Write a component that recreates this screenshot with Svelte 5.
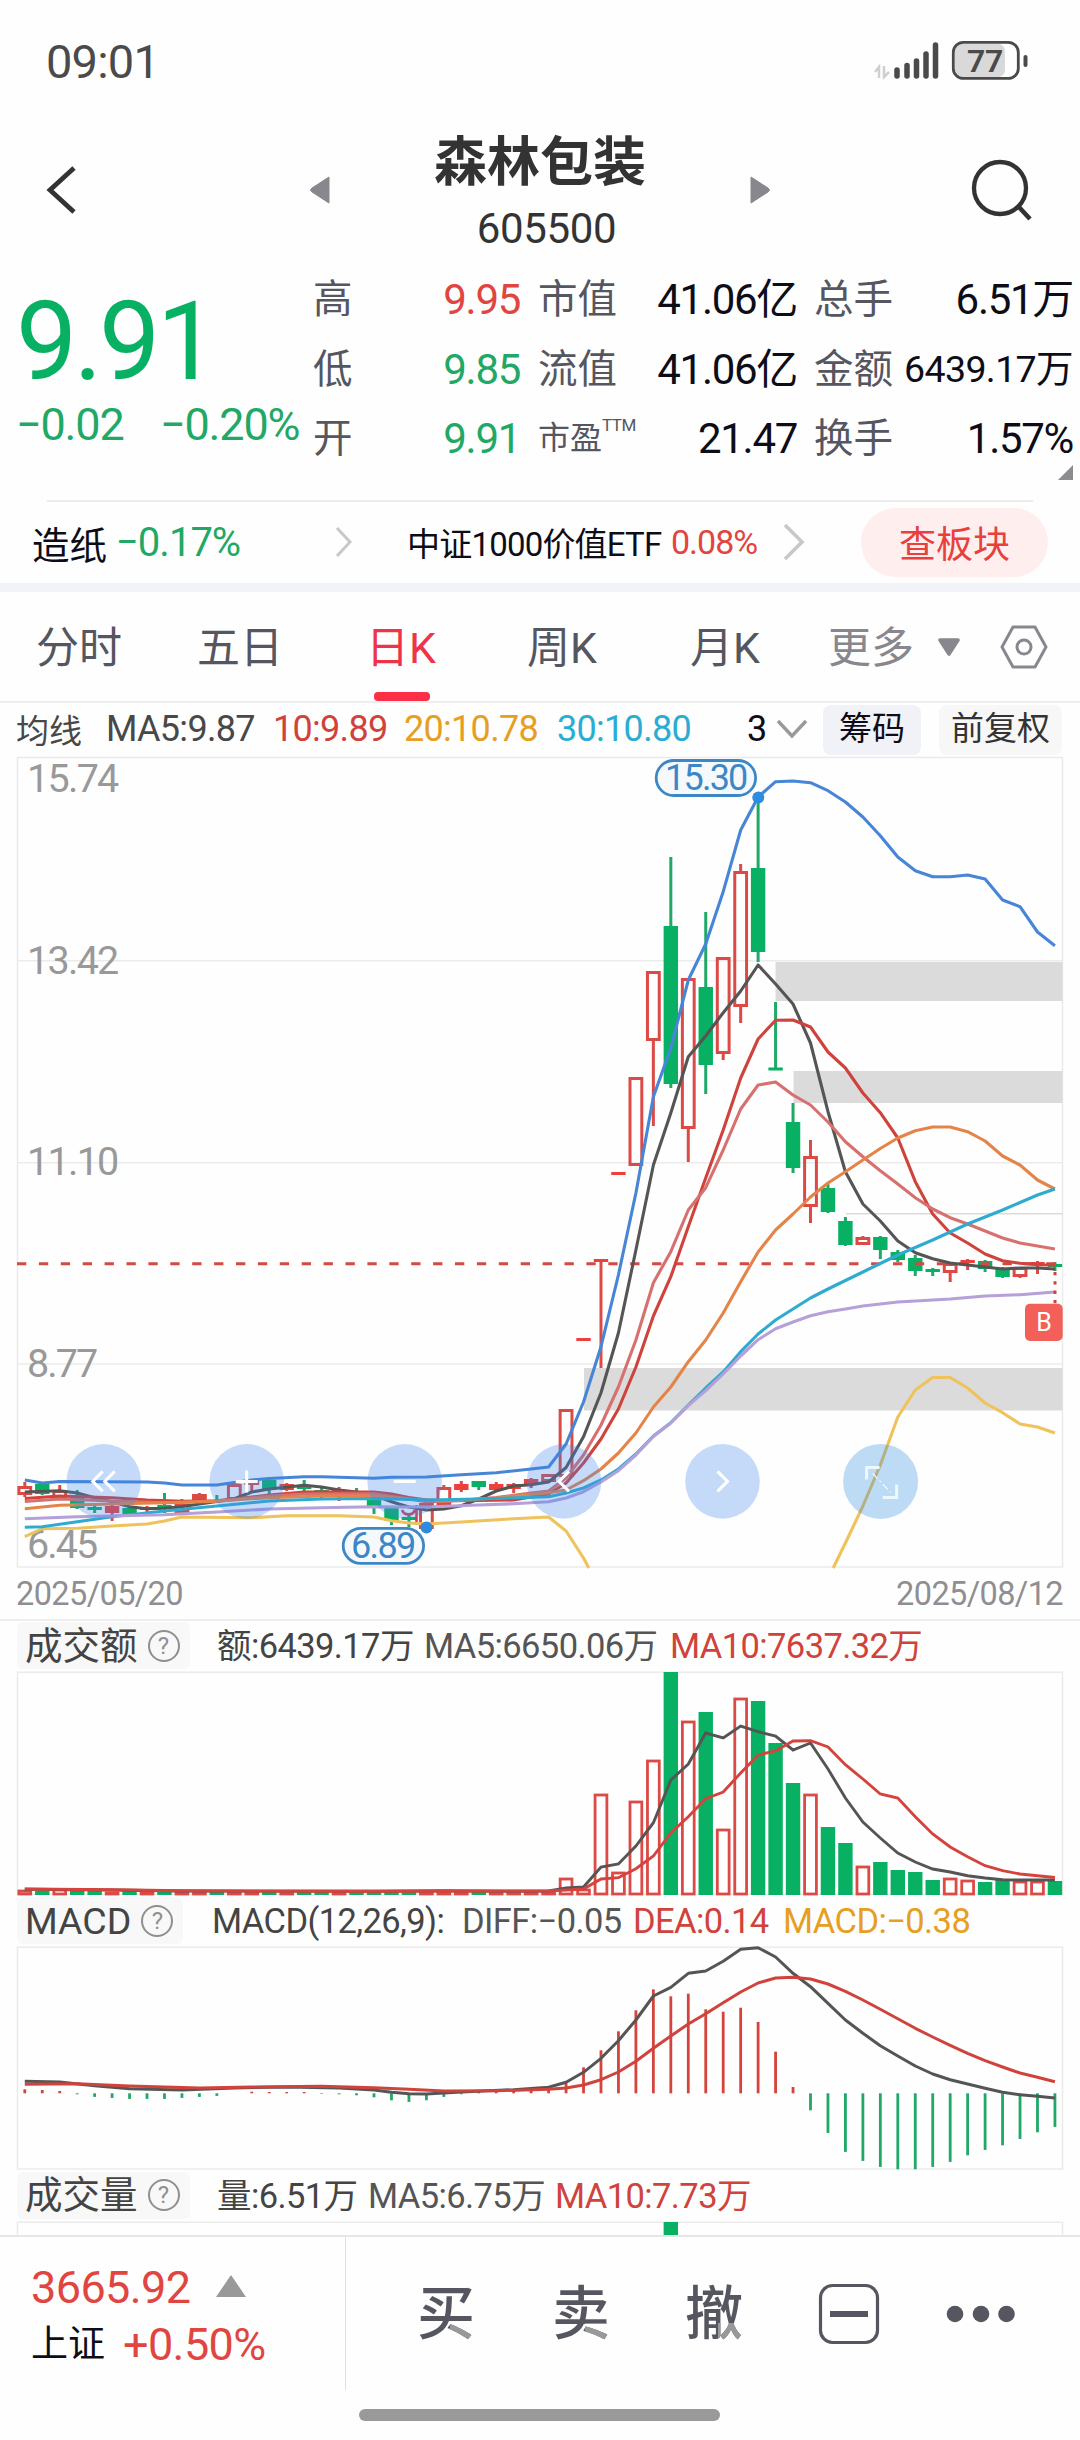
<script>
  const step = 17.46;

  /** @param {number} i bar number, 0 is the oldest day */
  const x = (i) => 24.8 + step * i;

  // "bar,y bar,y ..." -> svg points
  function line(text) {
    return text
      .trim()
      .split(/\s+/)
      .map((p) => {
        const [i, y] = p.split(',').map(Number);
        return `${x(i).toFixed(1)},${y}`;
      })
      .join(' ');
  }

  const quote = [
    ['高', '9.95', 'up', '市值', '41.06亿', '总手', '6.51万'],
    ['低', '9.85', 'down', '流值', '41.06亿', '金额', '6439.17万'],
    ['开', '9.91', 'down', '市盈', '21.47', '换手', '1.57%']
  ];

  const tabs = ['分时', '五日', '日K', '周K', '月K'];
  let active = '日K';

  // kind (r = hollow, f = filled red, g = green), high, body top, body bottom, low
  const candles = [
    ['r', 1482, 1487, 1494, 1497], ['g', 1484, 1484, 1494, 1495], ['r', 1485, 1491, 1498, 1498],
    ['g', 1490, 1497, 1508, 1509], ['g', 1505, 1507, 1510, 1513], ['f', 1505, 1506, 1513, 1521],
    ['g', 1507, 1508, 1514, 1515], ['f', 1506, 1507, 1510, 1513], ['g', 1493, 1505, 1507, 1513],
    ['r', 1499, 1505, 1512, 1513], ['r', 1493, 1495, 1499, 1500], ['g', 1495, 1500, 1502, 1503],
    ['r', 1484, 1485, 1499, 1500], ['r', 1480, 1481, 1484, 1491], ['g', 1480, 1480, 1490, 1494],
    ['f', 1483, 1484, 1490, 1491], ['g', 1480, 1485, 1489, 1492], ['g', 1488, 1490, 1497, 1499],
    ['f', 1487, 1490, 1494, 1501], ['g', 1488, 1491, 1493, 1495], ['g', 1492, 1498, 1506, 1514],
    ['g', 1507, 1508, 1521, 1525], ['g', 1514, 1517, 1520, 1527], ['r', 1503, 1504, 1528, 1529],
    ['r', 1485, 1488, 1504, 1506], ['f', 1481, 1484, 1490, 1492], ['g', 1481, 1481, 1487, 1490],
    ['f', 1482, 1484, 1490, 1491], ['f', 1483, 1484, 1489, 1493], ['f', 1478, 1479, 1485, 1488],
    ['r', 1474, 1475, 1481, 1482], ['r', 1409, 1410, 1476, 1477], ['f', 1339, 1338, 1341, 1340],
    ['f', 1260, 1259, 1262, 1368], ['f', 1173, 1172, 1175, 1174], ['r', 1077, 1078, 1165, 1166],
    ['r', 971, 972, 1040, 1126], ['g', 857, 926, 1084, 1088], ['r', 978, 979, 1128, 1162],
    ['g', 912, 987, 1065, 1094], ['r', 957, 958, 1053, 1060], ['r', 864, 872, 1006, 1023],
    ['g', 797, 868, 952, 962], ['g', 1002, 1067.5, 1070.5, 1070], ['g', 1103, 1122, 1168, 1173],
    ['r', 1140, 1157, 1206, 1223], ['g', 1184, 1188, 1212, 1213], ['g', 1217, 1221, 1245, 1246],
    ['r', 1236, 1238, 1244, 1245], ['g', 1236, 1237, 1250, 1259], ['g', 1250, 1252, 1260, 1262],
    ['g', 1255, 1258, 1271, 1276], ['g', 1268, 1269, 1272, 1276], ['r', 1263, 1264, 1272, 1282],
    ['f', 1259, 1260, 1263, 1270], ['g', 1260, 1261, 1269, 1272], ['g', 1267, 1268, 1277, 1278],
    ['r', 1267, 1268, 1276, 1278], ['f', 1261, 1262, 1265, 1274], ['g', 1262, 1264, 1267, 1271]
  ];

  const gaps = [
    { x: 775.5, y: 962, h: 39 },
    { x: 793.5, y: 1071, h: 32 },
    { x: 584, y: 1368, h: 42.5 },
    { x: 846, y: 1213, h: 1.5 }
  ];

  const priceLines = [
    { color: '#efc25c', points: '0,1536.7 1,1528.7 3,1528.3 5,1526 7,1524 8,1521 9,1517 13,1517.7 15,1515.7 18,1515.7 20,1517 21,1520.7 22,1523 23,1524 25,1522 28,1518.7 30,1517 31,1531 32,1558 32.3,1568' },
    { color: '#efc25c', points: '46.3,1568 47,1543 48,1506 49,1465 50,1417 51,1390 52,1377.5 53,1377.5 54,1388 55,1403 56,1412.7 57,1424 58,1427 59,1433' },
    { color: '#4785d6', points: '0,1480 1,1483 2,1481.5 7,1482 8,1483 9,1485 11,1485 12,1482.5 13,1480 14,1478.5 16,1476.7 17,1476.7 20,1478.3 21,1477.3 23,1477 25,1474.7 27,1472.7 29,1469 30,1467 31,1444 32,1402 33,1346.7 34,1275 35,1193 36,1096.7 37,1048 38,980 39,944 40,891.7 41,830 42,797 43,781.7 44,781 45,782.7 46,790.7 47,802 48,817 49,835.7 50,857 51,870.7 52,876.7 53,876.7 54,875 55,879 56,900 57,906.7 58,932 59,945.7' },
    { color: '#555555', points: '0,1492 2,1490.7 3,1493 4,1497.7 5,1501.7 6,1506.7 7,1508.7 8,1508.3 9,1506.7 10,1504 11,1501.5 12,1498.7 13,1492 14,1489 16,1485.3 17,1487 18,1490 19,1492 20,1495 21,1501.7 22,1507 23,1510 24,1509 25,1505.7 26,1499 27,1491 28,1486 29,1484.7 30,1482 31,1467.5 32,1436.7 33,1392.7 34,1333 35,1250 36,1165 37,1113 38,1056.7 39,1036 40,1012.7 41,991 42,965 43,984 44,1004 45,1043 46,1111.7 47,1171.7 48,1204 49,1221 50,1241 51,1252.7 52,1258.7 53,1263 54,1265 55,1267 56,1269 57,1268 58,1268 59,1269' },
    { color: '#cf433c', points: '0,1498.5 2,1496 5,1497.7 7,1500 9,1501.3 11,1500.7 13,1497 14,1495 16,1492 20,1492 21,1494 22,1497.5 23,1500 24,1500.7 26,1500.5 28,1500 30,1494 31,1483 32,1463 33,1439 34,1409 35,1367 36,1316 37,1276.7 38,1226.7 39,1178 40,1130 41,1078 42,1039 43,1020.3 44,1020 45,1027 46,1052 47,1068 48,1093 49,1112.7 50,1138 51,1181.7 52,1214 53,1233 54,1243 55,1254 56,1260.7 57,1263.3 58,1264.7 59,1265' },
    { color: '#d87070', points: '0,1501.5 2,1499 5,1501 8,1502.7 11,1501.5 14,1496 16,1494 20,1493.7 22,1499 23,1501.7 25,1500.5 27,1497.5 29,1493 30,1491 31,1478 32,1455 33,1425 34,1387 35,1340 36,1282.7 37,1251.7 38,1210 39,1187.7 40,1150 41,1109 42,1085 43,1082 44,1095 45,1105 46,1122 47,1141.7 48,1156.7 49,1170.7 50,1184 51,1197.7 52,1209 53,1217.7 54,1224 55,1231 56,1238 57,1243 58,1246 59,1249' },
    { color: '#e58448', points: '0,1508.7 2,1505.3 5,1504 8,1502.7 11,1501 14,1497.7 17,1496 20,1496 22,1499 24,1501 27,1498 30,1492.7 31,1490 32,1480.7 33,1469 34,1453 35,1433 36,1407 37,1387 38,1361.7 39,1340 40,1313 41,1281.7 42,1252 43,1230 44,1214 45,1197 46,1183 47,1171.7 48,1160 49,1148.5 50,1138 51,1130.7 52,1127 53,1127 54,1131.7 55,1141 56,1156 57,1165 58,1180 59,1189' },
    { color: '#30abd0', points: '0,1527.3 1,1526.7 3,1521.7 5,1516.7 8,1511 11,1506 14,1501 17,1499 20,1498.5 23,1500 26,1499 30,1496.7 31,1493 32,1488 33,1480 34,1469 35,1454 36,1436 37,1422.7 38,1405 39,1388 40,1372 41,1351.7 42,1334 43,1320 44,1309 45,1298 46,1289 48,1272 50,1255 52,1240 54,1224 56,1210 58,1195 59,1189' },
    { color: '#b5a0da', points: '0,1518.7 3,1516.7 8,1514.7 11,1512 14,1509 17,1507.7 20,1506.7 23,1507 26,1505 28,1503.7 30,1501.7 31,1498 32,1491.7 33,1482 34,1470.7 35,1455 36,1436.5 37,1423 38,1405.7 39,1390.7 40,1374 41,1356 42,1339.7 43,1328.7 44,1322 45,1315.7 46,1311.7 47,1309 48,1306 50,1302 53,1299 55,1296 57,1294.7 59,1292' }
  ];

  const priceLabels = [
    ['15.74', 792, 92], ['13.42', 974, 92], ['11.10', 1175, 92], ['8.77', 1377, 71], ['6.45', 1558, 71]
  ];

  const turnoverTop = [
    1890, 1891, 1889, 1891, 1891, 1892, 1891, 1891, 1892, 1892, 1892, 1892, 1892, 1892, 1892, 1892, 1892, 1892, 1892, 1892,
    1892, 1892, 1892, 1892, 1892, 1892, 1892, 1892, 1892, 1892, 1891, 1878, 1889, 1794, 1872, 1801, 1760, 1672, 1721, 1712,
    1829, 1698, 1701, 1743, 1783, 1794, 1827, 1843, 1866, 1862, 1870, 1872, 1880, 1878, 1880, 1882, 1880, 1881, 1881, 1881
  ];
  const turnoverMa5 = '0,1889.3 5,1890 9,1891 20,1891.3 24,1890.7 28,1891.3 30,1891 31,1888 32,1887 33,1867 34,1864 35,1846 36,1822.7 37,1780 38,1764 39,1733 40,1738 41,1726 42,1731.7 43,1736 44,1750 45,1743 46,1769 47,1798 48,1822 49,1838 50,1853 51,1862 52,1869 53,1872 54,1875.7 55,1878 56,1879.7 57,1880 59,1880';
  const turnoverMa10 = '0,1889 5,1889.7 9,1890.7 20,1891.3 30,1891 32,1889 33,1879 34,1877.7 35,1868.7 36,1856 37,1833 38,1816.7 39,1798.7 40,1792 41,1773 42,1755 43,1751 44,1741 45,1740.7 46,1747 47,1764.7 48,1779 49,1794 50,1798 51,1816.7 52,1834 53,1847 54,1856.7 55,1865.7 56,1870.7 57,1874 58,1875.7 59,1877.5';

  // bar length above (+) or below (-) the zero line
  const macd = [
    4, 3.3, 2.3, -1, -3.6, -4.6, -5.6, -5.6, -5.6, -4.6, -3.6, -2.6, 0, 1.6, 1.3, 1.3, 1.3, -0.6, -1, -2,
    -4, -7, -8.6, -7, -3.6, -1, 1.3, 2.3, 2.3, 3, 4, 10, 26, 43, 62, 83, 104, 97, 99.6, 84,
    81.6, 85.6, 71.3, 41.6, 6.3, -17, -39.6, -58.6, -67.6, -73.6, -76, -76, -73.6, -68.6, -62, -56.6, -52, -45.6, -39, -33.6
  ];
  const diff = '0,2081.3 2,2082 4,2085.7 6,2088.7 9,2090 12,2088 15,2087 18,2088 20,2090 21,2092.3 22,2093.7 23,2094 25,2092 28,2089.7 30,2087.3 31,2082.3 32,2072.3 33,2058.3 34,2040.7 35,2020 36,1996 37,1987.3 38,1973.3 39,1971 40,1961.3 41,1949.3 42,1947.7 43,1957 44,1973.3 45,1986.7 46,2003.3 47,2020 48,2033.3 49,2045.7 50,2056 51,2066 52,2074 53,2079.7 54,2084 55,2088.3 56,2092.3 57,2094.7 58,2096.3 59,2098';
  const dea = '0,2084.3 3,2083.7 6,2086 10,2088 13,2087 17,2086.3 20,2087.7 22,2089.3 24,2091 27,2090.7 30,2089.3 31,2088 32,2085 33,2079.7 34,2072 35,2061.3 36,2048.3 37,2036 38,2024 39,2013.7 40,2002.7 41,1992 42,1983 43,1978 44,1977.3 45,1979 46,1984 47,1991.3 48,2000 49,2009.3 50,2018.7 51,2028.3 52,2037 53,2045.3 54,2053.3 55,2060.7 56,2067 57,2073 58,2077.3 59,2081.7';

  const buttons = [
    { x: 103.7, d: 'M-1 -10 l-10 10 l10 10 M11 -10 l-10 10 l10 10' },
    { x: 246.7, d: 'M0 -11 v22 M-11 0 h22' },
    { x: 404.7, d: 'M-11 0 h22' },
    { x: 564, d: 'M5 -10 l-10 10 l10 10' },
    { x: 722.5, d: 'M-5 -10 l10 10 l-10 10' }
  ];
</script>

<div class="page">
  <div class="status">
    <span class="time">09:01</span>
    <svg width="160" height="46" viewBox="870 38 160 46">
      <path d="M875 72 l4 -5 v11 M884 66 v11 l5 -5" fill="none" stroke="#cfcfcf" stroke-width="2.5" />
      {#each [[897, 70], [907, 65.5], [916.5, 61], [926, 54], [935.5, 45]] as [cx, top]}
        <line x1={cx} x2={cx} y1={top} y2="76" stroke="#4a4a4a" stroke-width="5.5" stroke-linecap="round" />
      {/each}
      <rect x="955" y="44" width="50" height="33" rx="7" fill="#d9d9d9" />
      <rect x="953.3" y="42.4" width="65" height="36" rx="10" fill="none" stroke="#4a4a4a" stroke-width="2.8" />
      <path d="M1025.5 57 v8" stroke="#4a4a4a" stroke-width="4" stroke-linecap="round" />
      <text x="985" y="72.3" text-anchor="middle" font-size="32" font-weight="600" fill="#4a4a4a" textLength="36">77</text>
    </svg>
  </div>

  <header class="title">
    <svg width="34" height="52" viewBox="0 0 34 52"><path d="M28 4 L4 26 L28 48" fill="none" stroke="#333" stroke-width="4.8" /></svg>
    <svg width="22" height="30" viewBox="0 0 22 30"><path d="M20 2 v26 L3 17 q-3 -2 0 -4 Z" fill="#88878d" stroke="#88878d" stroke-linejoin="round" /></svg>
    <div class="stock">
      <h1>森林包装</h1>
      <span>605500</span>
    </div>
    <svg class="next" width="22" height="30" viewBox="0 0 22 30"><path d="M2 2 v26 L19 17 q3 -2 0 -4 Z" fill="#88878d" stroke="#88878d" stroke-linejoin="round" /></svg>
    <svg class="search" width="64" height="64" viewBox="0 0 64 64">
      <circle cx="30" cy="30" r="26" fill="none" stroke="#333" stroke-width="4.3" />
      <path d="M48 48 L60 61" stroke="#333" stroke-width="4.6" />
    </svg>
  </header>

  <section class="quote">
    <div class="now down">
      <strong>9.91</strong>
      <div class="change"><span>−0.02</span><span>−0.20%</span></div>
    </div>
    <div class="facts">
      {#each quote as [a, av, tone, b, bv, c, cv]}
        <div class="fact">
          <span class="label">{a}</span>
          <span class="value {tone}">{av}</span>
          {#if b === '市盈'}
            <span class="label small">{b}<sup>TTM</sup></span>
          {:else}
            <span class="label">{b}</span>
          {/if}
          <span class="value">{bv}</span>
          <span class="label">{c}</span>
          <span class="value" class:long={cv.length > 7}>{cv}</span>
        </div>
      {/each}
      <i class="corner"></i>
    </div>
  </section>

  <section class="sector">
    <span class="board">造纸</span>
    <span class="board-change down">−0.17%</span>
    <svg width="20" height="32" viewBox="0 0 20 32"><path d="M3 2 L16 16 L3 30" fill="none" stroke="#c8c8c8" stroke-width="3" /></svg>
    <span class="etf">中证1000价值ETF</span>
    <span class="etf-change up">0.08%</span>
    <svg width="26" height="38" viewBox="0 0 26 38"><path d="M3 2 L20 19 L3 36" fill="none" stroke="#c8c8c8" stroke-width="3.6" /></svg>
    <button>查板块</button>
  </section>

  <nav class="tabs">
    {#each tabs as tab}
      <span class:active={tab === active}>{tab}</span>
    {/each}
    <span class="more">更多</span>
    <svg width="24" height="20" viewBox="0 0 24 20"><path d="M3 3 H21 L12 17 Z" fill="#88878d" stroke="#88878d" stroke-width="3.6" stroke-linejoin="round" /></svg>
    <svg width="50" height="46" viewBox="0 0 50 46">
      <path d="M14 3 H36 L47 23 L36 43 H14 L3 23 Z" fill="none" stroke="#88878d" stroke-width="3" stroke-linejoin="round" />
      <circle cx="25" cy="23" r="7" fill="none" stroke="#88878d" stroke-width="3" />
    </svg>
  </nav>

  <div class="averages">
    <span>均线</span>
    <span>MA5:9.87</span>
    <span class="red">10:9.89</span>
    <span class="amber">20:10.78</span>
    <span class="cyan">30:10.80</span>
    <span class="three">3</span>
    <svg width="34" height="24" viewBox="0 0 34 24"><path d="M3 3 L17 18 L31 3" fill="none" stroke="#999" stroke-width="3.4" /></svg>
    <span class="chip">筹码</span>
    <span class="chip pale">前复权</span>
  </div>

  <svg class="chart" width="1080" height="811" viewBox="0 757 1080 811">
    <rect x="17.5" y="757.5" width="1045" height="809.5" fill="none" stroke="#ebebeb" stroke-width="1.5" />
    {#each [960.7, 1162.7, 1364] as y}
      <line x1="17" x2="1063" y1={y} y2={y} stroke="#ebebeb" stroke-width="1.5" />
    {/each}
    {#each gaps as gap}
      <rect x={gap.x} y={gap.y} width={1062.5 - gap.x} height={gap.h} fill="#dbdbdb" />
    {/each}
    {#each priceLabels as [label, y, w]}
      <text x="27" {y} font-size="39.5" fill="#999" textLength={w}>{label}</text>
    {/each}

    {#each candles as [kind, high, top, bottom, low], i}
      {@const color = kind === 'g' ? '#1fa866' : '#dc4a46'}
      {#if kind === 'r'}
        <path d="M{x(i)} {high} V{top} M{x(i)} {bottom} V{low}" stroke={color} stroke-width="3" />
        <rect x={x(i) - 5.9} y={top + 0.5} width="11.8" height={bottom - top - 1} fill="none" stroke={color} stroke-width="3" />
      {:else}
        <line x1={x(i)} x2={x(i)} y1={high} y2={low} stroke={color} stroke-width="3" />
        <rect x={x(i) - 7.2} y={top} width="14.4" height={bottom - top} fill={kind === 'g' ? '#07b062' : '#ee3f3c'} />
      {/if}
    {/each}
    <path d="M402 1510 a7 7 0 0 0 13 0 M416.5 1505 V1525" fill="none" stroke="#c9435a" stroke-width="2.6" />

    <line x1="17" x2="1063" y1="1263.7" y2="1263.7" stroke="#d24a42" stroke-width="3" stroke-dasharray="9.3 12.6" />
    {#each priceLines as { color, points }}
      <polyline points={line(points)} fill="none" stroke={color} stroke-width="3.1" stroke-linejoin="round" />
    {/each}

    <rect x="656.2" y="760.5" width="99.4" height="35" rx="17.5" fill="#f6f9fb" stroke="#3c87c6" stroke-width="2.8" />
    <text x="665" y="790" font-size="36" fill="#3c87c6" textLength="83">15.30</text>
    <circle cx="758.3" cy="797.5" r="6" fill="#2b8ce0" />
    <rect x="343.2" y="1528.3" width="80.4" height="35" rx="17.5" fill="#f6f9fb" stroke="#3c87c6" stroke-width="2.8" />
    <text x="351" y="1557.5" font-size="36" fill="#3c87c6" textLength="65">6.89</text>
    <circle cx="426.5" cy="1527.5" r="6" fill="#2b8ce0" />

    <line x1="1055" x2="1055" y1="1272" y2="1304" stroke="#cf433c" stroke-width="3" stroke-dasharray="3.3 6" />
    <rect x="1025" y="1303.7" width="37.7" height="37.3" rx="5" fill="#f3605a" />
    <text x="1044" y="1331" text-anchor="middle" font-size="25" fill="#fff">B</text>

    {#each buttons as b}
      <g transform="translate({b.x} 1481.4)">
        <circle r="37.3" fill="#3f88ea" fill-opacity="0.3" />
        <path d={b.d} fill="none" stroke="#fff" stroke-width="3" />
      </g>
    {/each}
    <g transform="translate(880.6 1481.4)">
      <circle r="37.5" fill="#2a8ce0" fill-opacity="0.3" />
      <path d="M-14 -2 V-14 H-1 M2 16 H16 V3" fill="none" stroke="#eef8ff" stroke-width="3" />
      <path d="M-8 -8 L10 11" stroke="#eef8ff" stroke-width="1.3" stroke-dasharray="7 3 2 3" />
    </g>
  </svg>

  <div class="dates"><span>2025/05/20</span><span>2025/08/12</span></div>

  <div class="indicator ruled">
    <span class="tag">成交额<i>?</i></span>
    <span>额:6439.17万</span>
    <span class="grey">MA5:6650.06万</span>
    <span class="red">MA10:7637.32万</span>
  </div>
  <svg class="chart" width="1080" height="225" viewBox="0 1671 1080 225">
    <rect x="17.5" y="1672.3" width="1045" height="222" fill="none" stroke="#ebebeb" stroke-width="1.5" />
    {#each turnoverTop as top, i}
      {#if candles[i][0] === 'g'}
        <rect x={x(i) - 7.2} y={top} width="14.4" height={1895 - top} fill="#07b062" />
      {:else}
        <rect x={x(i) - 5.9} y={top + 1} width="11.8" height={1893 - top} fill="#fff" stroke="#dc4a46" stroke-width="2.8" />
      {/if}
    {/each}
    <polyline points={line(turnoverMa5)} fill="none" stroke="#555" stroke-width="2.9" />
    <polyline points={line(turnoverMa10)} fill="none" stroke="#d4433c" stroke-width="2.9" />
  </svg>

  <div class="indicator macd">
    <span class="tag">MACD<i>?</i></span>
    <span>MACD(12,26,9):</span>
    <span class="grey">DIFF:−0.05</span>
    <span class="red">DEA:0.14</span>
    <span class="amber">MACD:−0.38</span>
  </div>
  <svg class="chart" width="1080" height="224" viewBox="0 1946 1080 224">
    <rect x="17.5" y="1947.3" width="1045" height="221.7" fill="none" stroke="#ebebeb" stroke-width="1.5" />
    {#each macd as v, i}
      <line x1={x(i)} x2={x(i)} y1="2093.3" y2={2093.3 - v} stroke={v > 0 ? '#d4433c' : '#1fa866'} stroke-width="2.8" />
    {/each}
    <polyline points={line(diff)} fill="none" stroke="#555" stroke-width="3" stroke-linejoin="round" />
    <polyline points={line(dea)} fill="none" stroke="#cf433c" stroke-width="3" stroke-linejoin="round" />
  </svg>

  <div class="indicator volume">
    <span class="tag">成交量<i>?</i></span>
    <span>量:6.51万</span>
    <span class="grey">MA5:6.75万</span>
    <span class="red">MA10:7.73万</span>
  </div>
  <svg width="1080" height="14" viewBox="0 2221 1080 14">
    <path d="M17.5 2236 V2222.3 H1062.5 V2236" fill="none" stroke="#ebebeb" stroke-width="1.5" />
    <rect x={x(37) - 7.2} y="2222" width="14.4" height="14" fill="#07b062" />
  </svg>

  <footer>
    <div class="index">
      <div class="up points">3665.92 <svg width="32" height="24" viewBox="0 0 32 24"><path d="M16 1 L31 23 H1 Z" fill="#999" /></svg></div>
      <div class="rate"><span>上证</span><span class="up">+0.50%</span></div>
    </div>
    <div class="actions">
      <b>买</b>
      <b>卖</b>
      <b>撤</b>
      <svg width="62" height="62" viewBox="0 0 62 62">
        <rect x="2.5" y="2.5" width="57" height="57" rx="12" fill="none" stroke="#55565f" stroke-width="3.2" />
        <path d="M12 31 H50" stroke="#55565f" stroke-width="6" />
      </svg>
      <svg width="70" height="20" viewBox="0 0 70 20">
        {#each [9, 35, 60.5] as cx}<circle {cx} cy="10" r="8.3" fill="#55565f" />{/each}
      </svg>
    </div>
    <div class="home"></div>
  </footer>
</div>

<style>
  .page {
    width: 1080px;
    height: 2440px;
    overflow: hidden;
    background: #fefefe;
    color: #0d0d18;
    font-family: Roboto, "Noto Sans CJK SC", sans-serif;
    letter-spacing: -0.02em;
    white-space: nowrap;
  }

  svg {
    display: block;
    flex: none;
  }
  .chart { overflow: visible; }

  .up { color: #e04540; }
  .down { color: #1fa866; }
  .red { color: #cf433c; }
  .amber { color: #e69f22; }
  .cyan { color: #2badd3; }
  .grey { color: #555; }

  .status {
    height: 118px;
    display: flex;
    justify-content: space-between;
    align-items: flex-start;
    padding: 38px 50px 0 46px;
    box-sizing: border-box;
  }
  .time {
    font-size: 47px;
    line-height: 47px;
    letter-spacing: -0.8px;
    color: #4a4a4a;
  }

  .title {
    height: 144px;
    display: grid;
    grid-template-columns: 263px 60px 345px 242px 1fr;
    align-items: center;
    padding-left: 46px;
    box-sizing: border-box;
    color: #333;
  }
  .stock {
    text-align: center;
    padding: 10px 0 0 0;
  }
  h1 {
    margin: 2px 0 -2px 0;
    padding-right: 3px;
    font-size: 53px;
    line-height: 67px;
    font-weight: 700;
    letter-spacing: 0;
  }
  .stock span {
    display: block;
    font-size: 42px;
    line-height: 67px;
    padding-left: 10px;
  }
  .next { margin-left: 35px; }
  .search { margin-left: 14px; }

  .quote {
    height: 238px;
    display: flex;
  }
  .now {
    width: 314px;
    padding: 27px 0 0 16px;
    box-sizing: border-box;
  }
  .now strong {
    display: block;
    font-size: 109px;
    line-height: 106px;
    font-weight: 400;
    letter-spacing: -3.5px;
    color: #07b062;
  }
  .change {
    display: grid;
    grid-template-columns: 144px 1fr;
    font-size: 45px;
    line-height: 59px;
    letter-spacing: -1.2px;
  }
  .facts {
    flex: 1;
    padding-top: 3px;
    position: relative;
  }
  .fact {
    display: grid;
    grid-template-columns: 60px 146px 19px 80px 178px 18px 84px 174px;
    height: 69.5px;
    line-height: 69.5px;
    font-size: 42px;
    letter-spacing: -1.3px;
  }
  .fact > :nth-child(3) { grid-column: 4; }
  .fact > :nth-child(5) { grid-column: 7; }
  .fact > :nth-child(6) { margin-left: -30px; }
  .label {
    font-size: 39.5px;
    letter-spacing: 0;
    color: #55565f;
    margin-left: -1px;
  }
  .small { font-size: 32px; }
  sup {
    font-size: 17px;
    line-height: 0;
    vertical-align: 18px;
    letter-spacing: -0.5px;
  }
  .value { text-align: right; }
  .long {
    font-size: 37.5px;
    letter-spacing: -0.6px;
  }
  .corner {
    position: absolute;
    right: 7px;
    top: 203px;
    border-left: 15px solid transparent;
    border-bottom: 15px solid #8b8b90;
  }

  .sector {
    height: 83px;
    display: grid;
    grid-template-columns: 86px 216px 75px 262px 111px 78px 188px;
    align-items: center;
    padding: 1px 0 0 32px;
    box-sizing: border-box;
    background: linear-gradient(#ececec, #ececec) 47px 0 / 986px 2px no-repeat;
  }
  .board {
    font-size: 37.5px;
    letter-spacing: 0;
  }
  .board-change {
    font-size: 40px;
    letter-spacing: -1px;
    margin-left: -2px;
  }
  .etf {
    font-size: 33px;
    letter-spacing: -0.8px;
    margin-left: -2px;
  }
  .etf-change {
    font-size: 34px;
    letter-spacing: -1px;
  }
  button {
    height: 69px;
    margin-left: 1px;
    padding: 0;
    border: none;
    border-radius: 35px;
    background: #ffeeee;
    color: #e8403c;
    font: inherit;
    font-size: 37px;
    letter-spacing: 0;
  }

  .tabs {
    height: 120px;
    border-top: 9px solid #f2f3f8;
    border-bottom: 2px solid #eee;
    box-sizing: border-box;
    display: grid;
    grid-template-columns: 161px 169px 161px 163px 138px 108px 62px 1fr;
    align-items: center;
    padding-left: 37px;
    font-size: 43px;
    line-height: 109px;
    letter-spacing: 0;
    color: #55565f;
  }
  .tabs span {
    position: relative;
    padding-top: 2px;
    margin: 0 0 -2px -1px;
  }
  .tabs .active { color: #ef3348; }
  .tabs .active::after {
    content: "";
    position: absolute;
    left: 8px;
    bottom: 2px;
    width: 56px;
    height: 9px;
    border-radius: 4px;
    background: #fb2f45;
  }
  .tabs .more { color: #88878d; }

  .averages {
    height: 54px;
    display: grid;
    grid-template-columns: 90px 167px 131px 153px 190px 27px 48px 116px 123px;
    align-items: center;
    padding-left: 17px;
    box-sizing: border-box;
    font-size: 36px;
    letter-spacing: -0.7px;
    color: #484848;
  }
  .averages > span:not(.chip) {
    margin: -2px 0 0 -1px;
  }
  .averages > :first-child { font-size: 33px; letter-spacing: 0; }
  .averages .three { color: #0d0d18; }
  .averages .chip {
    justify-self: start;
    height: 50px;
    line-height: 48px;
    padding: 0 16px;
    border-radius: 8px;
    background: #f1f2f8;
    color: #0d0d18;
    font-size: 33px;
    letter-spacing: 0;
  }
  .averages .pale {
    padding: 0 12px;
    background: #f7f7f8;
    color: #333;
  }

  .dates {
    height: 51px;
    line-height: 52px;
    display: flex;
    justify-content: space-between;
    padding: 0 17px 0 16px;
    font-size: 32.5px;
    letter-spacing: -0.6px;
    color: #8e8e93;
  }

  .indicator {
    height: 50px;
    display: grid;
    grid-template-columns: 201px 207px 246px 1fr;
    align-items: center;
    padding-left: 16px;
    font-size: 34.5px;
    line-height: 46px;
    letter-spacing: -0.6px;
    color: #444;
  }
  .ruled { border-top: 2px solid #eee; }
  .macd { grid-template-columns: 196px 250px 171px 150px 1fr; }
  .volume {
    height: 51px;
    grid-template-columns: 201px 151px 187px 1fr;
  }
  .indicator .tag {
    justify-self: start;
    height: 47px;
    display: flex;
    align-items: center;
    gap: 10px;
    margin: 0 0 1px 1px;
    padding: 0 10px 0 8px;
    border-radius: 6px;
    background: #f8f8f8;
    font-size: 37.5px;
    letter-spacing: 0;
  }
  .tag i {
    width: 28px;
    height: 28px;
    border: 2px solid #8f8f8f;
    border-radius: 50%;
    font-size: 24px;
    line-height: 29px;
    font-style: normal;
    text-align: center;
    color: #8f8f8f;
  }

  footer {
    height: 205px;
    border-top: 2px solid #e6e6e6;
    box-sizing: border-box;
    display: grid;
    grid-template-columns: 346px 1fr;
    grid-template-rows: 153px 50px;
    background: #fefefe;
    position: relative;
  }
  .index {
    border-right: 1.5px solid #e0e0e0;
    padding: 22px 0 0 31px;
    font-size: 45px;
    line-height: 57px;
    letter-spacing: -0.6px;
  }
  .points {
    display: flex;
    align-items: center;
    gap: 25px;
  }
  .points svg { margin-top: -4px; }
  .rate {
    display: grid;
    grid-template-columns: 92px 1fr;
  }
  .rate span:first-child {
    font-size: 37px;
    letter-spacing: 0;
  }
  .actions {
    display: grid;
    grid-template-columns: 135px 133px 133px 128px 1fr;
    align-items: center;
    padding-left: 71px;
  }
  .actions b {
    width: 58px;
    font-size: 58px;
    line-height: 66px;
    font-weight: 500;
    letter-spacing: 0;
    color: transparent;
    background: linear-gradient(#999, #999) 100% 86% / 43% 25% no-repeat, #55565f;
    background-clip: text;
  }
  .home {
    grid-column: 1 / 3;
    justify-self: center;
    width: 361px;
    height: 12px;
    margin: 19px 2px 0 0;
    border-radius: 6px;
    background: #999;
  }
</style>
